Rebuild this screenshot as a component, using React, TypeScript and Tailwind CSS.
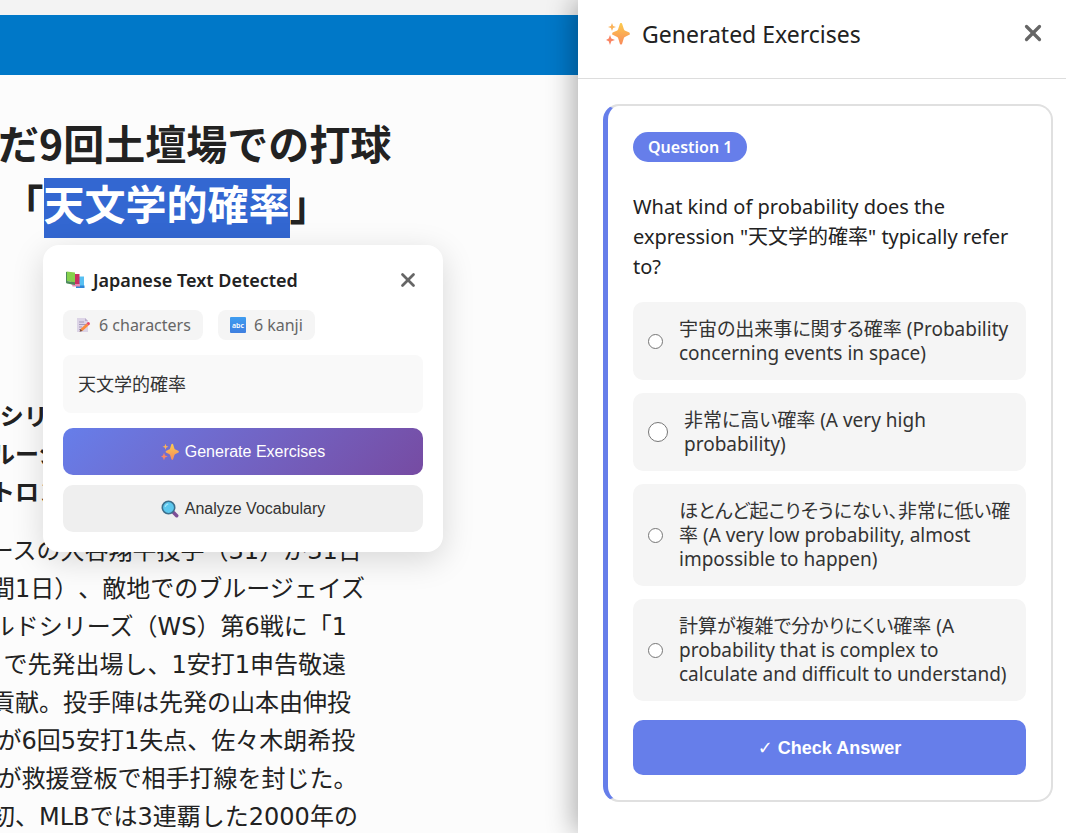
import { useState } from 'react';
import { X } from 'lucide-react';

const leadLines = ['|ワールドシリーズ', '第六戦ブルージェイズ', '本拠地・トロント'];

const bodyLines = [
  '　ドジャースの大谷翔平投手（31）が31日',
  '（日本時間1日）、敵地でのブルージェイズ',
  'とのワールドシリーズ（WS）第6戦に「1',
  '番・DH」で先発出場し、1安打1申告敬遠',
  'で勝利に貢献。投手陣は先発の山本由伸投',
  '手（27）が6回5安打1失点、佐々木朗希投',
  '手（23）が救援登板で相手打線を封じた。',
  '球団史上初、MLBでは3連覇した2000年の',
];

const options = [
  { id: 'a', lines: ['宇宙の出来事に関する確率 (Probability', 'concerning events in space)'] },
  { id: 'b', lines: ['非常に高い確率 (A very high', 'probability)'], hovered: true },
  { id: 'c', lines: ['ほとんど起こりそうにない、非常に低い確', '率 (A very low probability, almost', 'impossible to happen)'] },
  { id: 'd', lines: ['計算が複雑で分かりにくい確率 (A', 'probability that is complex to', 'calculate and difficult to understand)'] },
];

function Sparkles({ className }: { className: string }) {
  return (
    <svg viewBox="0 0 24 24" className={className} aria-hidden="true">
      <defs>
        <linearGradient id="spark" x1="0" y1="0" x2="0" y2="1">
          <stop offset="0" stopColor="#fccb4e" />
          <stop offset="1" stopColor="#f98b5b" />
        </linearGradient>
      </defs>
      <path
        fill="url(#spark)"
        d="M15 1c.7 0 1 .5 1.200 1.100l1.700 5.200c.2.7.7 1.200 1.400 1.400l3.500 1.600c.6.2 1 .6 1 1.400s-.4 1.200-1 1.400l-3.500 1.600c-.7.2-1.200.7-1.400 1.400L16.200 21.400c-.2.7-.5 1.100-1.200 1.100s-1-.4-1.200-1.100l-1.700-5.300c-.2-.7-.7-1.200-1.400-1.400l-3.500-1.600c-.6-.2-1-.6-1-1.400s.4-1.200 1-1.400l3.500-1.600c.7-.2 1.200-.7 1.400-1.400L13.800 2.100C14 1.500 14.300 1 15 1z"
      />
      <path fill="#fbb35a" d="M6 1l1.100 3L10 5 7.100 6.100 6 9 4.900 6.100 2 5l2.900-1z" />
      <path fill="#f98563" d="M4 13l1.300 3.600L9 18l-3.700 1.300L4 23l-1.300-3.700L0 18l2.700-1.400z" />
    </svg>
  );
}

function Books({ className }: { className: string }) {
  return (
    <svg viewBox="0 0 20 20" className={className} aria-hidden="true">
      <path fill="#58c0f2" d="M11 6.500h8v9.500h-8z" />
      <path fill="#2f86d6" d="M11 15.500h8.500V18H11z" />
      <path fill="#c92f63" d="M6.500 4h8v10.500h-8z" />
      <path fill="#e58cb4" d="M7 14h8v2.500H7.500z" />
      <path fill="#86d14c" d="M1.500 1.500l8.500 1v10l-8.500-1.500z" />
      <path fill="#4c8a5c" d="M1 2l1 0v9l8 1.500V15l-8-1.500c-.8-.2-1-.7-1-1.500z" />
    </svg>
  );
}

function Memo({ className }: { className: string }) {
  return (
    <svg viewBox="0 0 16 16" className={className} aria-hidden="true">
      <path fill="#dcd4e6" d="M2 1h8l3 3v11H2z" />
      <path fill="#b9abcb" d="M10 1l3 3h-3z" />
      <path stroke="#a698ba" strokeWidth="1" d="M4 5h5M4 7.500h7M4 10h3M4 12.500h2" />
      <path fill="#fb8a3c" d="M5.500 12l6-5.500 2 2-6 5.500z" />
      <path fill="#e8486a" d="M11.500 6.500l1.200-1.200c1-.8 2.900 1 2 2l-1.200 1.200z" />
      <path fill="#7a4a3a" d="M5.500 12l2 2-3 .8z" />
    </svg>
  );
}

function Letters({ className }: { className: string }) {
  return (
    <svg viewBox="0 0 16 16" className={className} aria-hidden="true">
      <defs>
        <linearGradient id="tile" x1="0" y1="0" x2="0" y2="1">
          <stop offset="0" stopColor="#3f9df0" />
          <stop offset="1" stopColor="#3f7fe0" />
        </linearGradient>
      </defs>
      <rect width="16" height="16" rx="1" fill="url(#tile)" />
      <text x="8" y="10.500" textAnchor="middle" fontSize="7" fontWeight="600" fill="#fff" fontFamily="Noto Sans, sans-serif">
        abc
      </text>
    </svg>
  );
}

function Magnifier({ className }: { className: string }) {
  return (
    <svg viewBox="0 0 18 18" className={className} aria-hidden="true">
      <path stroke="#7d4f96" strokeWidth="3.500" strokeLinecap="round" d="M12.500 12.500l3.200 3.200" />
      <circle cx="7.500" cy="7.500" r="6.200" fill="#5cc8ee" stroke="#3c6f8c" strokeWidth="1.600" />
      <path stroke="#a5e6fb" strokeWidth="1.200" strokeLinecap="round" fill="none" d="M4.300 6.500c.4-1.300 1.300-2.100 2.500-2.400" />
    </svg>
  );
}

function Article() {
  return (
    <main className="min-w-0 flex-1 overflow-hidden bg-[#fcfcfc] font-['DejaVu_Sans','Noto_Sans_CJK_JP',sans-serif] text-[#222]">
      <div className="h-[15px] bg-[#f3f3f3]" />
      <div className="h-[60px] bg-[#0078c8]" />
      <article className="-ml-[105px] w-[543px] pt-[37px] whitespace-nowrap [text-spacing-trim:space-all]">
        <h1 className="text-center font-['Noto_Sans_CJK_JP',sans-serif] text-[41px] leading-[60px] font-bold">
          <span className="block">!まだ9回土壇場での打球</span>
          <span className="block">
            「<mark className="inline-block bg-[#3367d1] pb-3 leading-[48px] text-white">天文学的確率</mark>」
          </span>
        </h1>
        <p className="mt-40 text-2xl leading-[38px] font-bold">
          {leadLines.map((line) => (
            <span key={line} className="block">{line}</span>
          ))}
        </p>
        <p className="mt-5 text-2xl leading-[38px]">
          {bodyLines.map((line) => (
            <span key={line} className="block">{line}</span>
          ))}
        </p>
      </article>
    </main>
  );
}

function SelectionPopup() {
  return (
    <section className="absolute top-[245px] left-[43px] z-10 w-[400px] rounded-2xl bg-white p-5 shadow-[0_8px_32px_rgba(0,0,0,0.15)]">
      <div className="mb-[15px] flex h-[30px] items-center justify-between pr-1">
        <h2 className="flex items-center gap-2 text-lg font-semibold text-[#222]">
          <Books className="ml-0.5 size-5" />
          Japanese Text Detected
        </h2>
        <button type="button" aria-label="Close popup" className="text-[#666]">
          <X className="size-[22px]" strokeWidth={3} />
        </button>
      </div>
      <div className="mb-[15px] flex gap-[15px] text-base text-[#666]">
        <span className="flex h-[30px] items-center gap-2 rounded-lg bg-[#f5f5f5] px-3">
          <Memo className="size-4" />
          6 characters
        </span>
        <span className="flex h-[30px] items-center gap-2 rounded-lg bg-[#f5f5f5] px-3">
          <Letters className="size-4" />
          6 kanji
        </span>
      </div>
      <p className="mb-[15px] rounded-lg bg-[#f9f9f9] p-[15px] text-lg leading-7 text-[#333]">天文学的確率</p>
      <div className="flex flex-col gap-2.5 font-['Liberation_Sans',sans-serif] text-base">
        <button
          type="button"
          className="flex h-[47px] items-center justify-center gap-1.5 rounded-[10px] bg-linear-135 from-[#667eea] to-[#764ba2] text-white"
        >
          <Sparkles className="size-[18px]" />
          Generate Exercises
        </button>
        <button
          type="button"
          className="flex h-[47px] items-center justify-center gap-1.5 rounded-[10px] bg-[#efefef] text-[#333]"
        >
          <Magnifier className="size-[18px]" />
          Analyze Vocabulary
        </button>
      </div>
    </section>
  );
}

function ExercisePanel() {
  const [answer, setAnswer] = useState('');

  return (
    <aside className="relative z-20 w-[488px] shrink-0 bg-white shadow-[-5px_0_25px_rgba(0,0,0,0.3)]">
      <header className="flex h-[79px] items-start justify-between border-b border-[#ddd] pt-[17px] pr-5 pl-7">
        <h2 className="flex items-center gap-3 text-[23px] leading-[34px] text-[#222]">
          <Sparkles className="size-6" />
          Generated Exercises
        </h2>
        <button type="button" aria-label="Close exercises" className="mt-[3px] text-[#666]">
          <X className="size-[26px]" strokeWidth={3} />
        </button>
      </header>
      <div className="pt-[25px] pr-[13px] pl-[25px]">
        <form
          className="rounded-2xl border-2 border-l-[5px] border-[#e0e0e0] border-l-[#667eea] p-[25px] pt-[26px]"
          onSubmit={(e) => e.preventDefault()}
        >
          <span className="inline-flex h-[30px] items-center rounded-full bg-[#667eea] px-[15px] text-base font-semibold text-white">
            Question 1
          </span>
          <fieldset>
            <legend className="pt-[30px] pb-5 text-xl leading-[30px] text-[#222]">
              <span className="block">What kind of probability does the</span>
              <span className="block">expression "天文学的確率" typically refer</span>
              <span className="block">to?</span>
            </legend>
            <div className="flex flex-col gap-[13px]">
              {options.map((option) => (
                <label
                  key={option.id}
                  className="flex items-center gap-4 rounded-[10px] bg-[#f5f5f5] p-[15px] text-[19px] leading-6 text-[#333] [font-feature-settings:'palt']"
                >
                  <input
                    type="radio"
                    name="answer"
                    value={option.id}
                    checked={answer === option.id}
                    onChange={() => setAnswer(option.id)}
                    className={`shrink-0 appearance-none rounded-full border border-[#767676] bg-white checked:border-4 checked:border-[#667eea] ${option.hovered ? 'size-5' : 'size-[15px]'}`}
                  />
                  <span className="whitespace-nowrap">
                    {option.lines.map((line) => (
                      <span key={line} className="block">{line}</span>
                    ))}
                  </span>
                </label>
              ))}
            </div>
          </fieldset>
          <button
            type="submit"
            className="mt-[19px] h-[55px] w-full rounded-[10px] bg-[#667eea] font-['Liberation_Sans','DejaVu_Sans',sans-serif] text-lg font-bold text-white"
          >
            ✓ Check Answer
          </button>
        </form>
      </div>
    </aside>
  );
}

export default function App() {
  return (
    <div lang="ja" className="relative flex h-screen overflow-hidden font-['Noto_Sans','Noto_Sans_CJK_JP',sans-serif]">
      <Article />
      <SelectionPopup />
      <ExercisePanel />
    </div>
  );
}
